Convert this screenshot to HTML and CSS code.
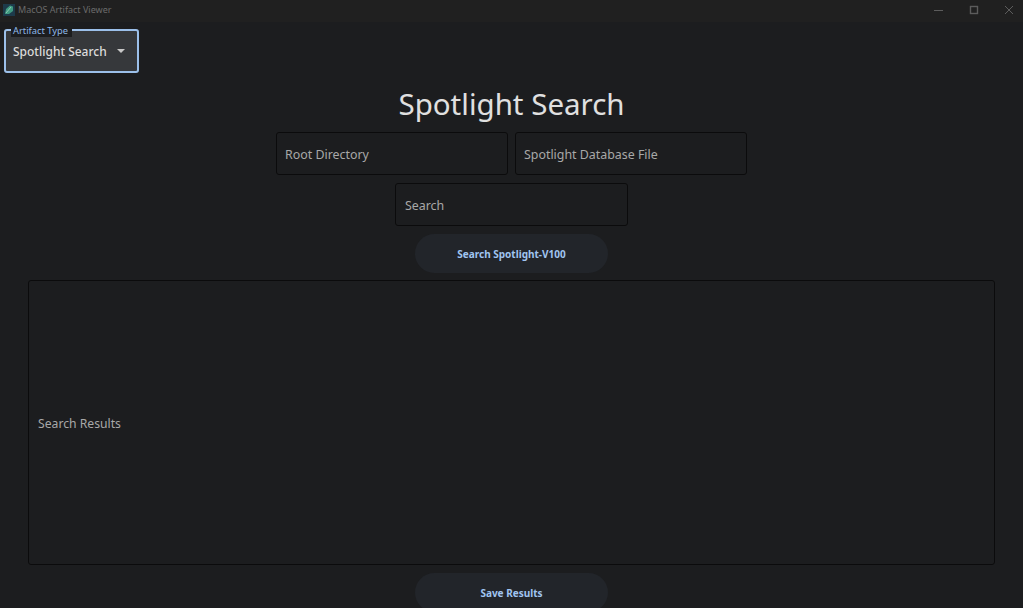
FILE: index.html
```html
<!DOCTYPE html>
<html lang="en">
<head>
    <title>MacOS Artifact Viewer</title>
    <link rel="stylesheet" href="styles.css">
</head>
<body>
    <div class="titlebar">
        <div class="app-title">
            <svg class="app-icon" width="12" height="12" viewBox="0 0 12 12">
                <rect width="12" height="12" fill="#1d3a4a"/>
                <path d="M2 10 L3 5 L7 1.5 L10 2.5 L10 7 L6 10 Z" fill="#3f9a80"/>
                <path d="M3 9 L8 3" stroke="#8cc8b4" stroke-width="1"/>
            </svg>
            <span>MacOS Artifact Viewer</span>
        </div>
        <div class="window-controls">
            <svg width="10" height="10" viewBox="0 0 10 10"><path d="M0 5.5 H9" stroke="#5c5c5c"/></svg>
            <svg width="10" height="10" viewBox="0 0 10 10"><rect x="1.5" y="1.5" width="7" height="7" fill="none" stroke="#5c5c5c" stroke-width="1.4"/></svg>
            <svg width="10" height="10" viewBox="0 0 10 10"><path d="M1 1 L9 9 M9 1 L1 9" stroke="#5c5c5c"/></svg>
        </div>
    </div>

    <div class="content">
        <div class="toolbar">
            <div class="combo">
                <span class="combo-label">Artifact Type</span>
                <span class="combo-value">Spotlight Search</span>
                <span class="combo-arrow"></span>
            </div>
        </div>

        <h1>Spotlight Search</h1>

        <div class="field-row">
            <div class="field">Root Directory</div>
            <div class="field">Spotlight Database File</div>
        </div>
        <div class="field-row">
            <div class="field field-wide">Search</div>
        </div>

        <button class="button">Search Spotlight-V100</button>

        <div class="results">Search Results</div>

        <button class="button">Save Results</button>
    </div>
</body>
</html>
```

FILE: styles.css
```css
html, body {
    height: 100%;
}

body {
    font-family: "Noto Sans", "Open Sans", sans-serif;
    background-color: #1c1d1f;
    color: #a8a8a8;
    margin: 0;
    overflow: hidden;
}

.titlebar {
    box-sizing: border-box;
    height: 22px;
    padding-bottom: 3px;
    background-color: #202020;
    display: flex;
    justify-content: space-between;
    align-items: center;
}

.app-title {
    display: flex;
    align-items: center;
    gap: 3px;
    padding-left: 3px;
    font-size: 9px;
    color: #6b6b6b;
}

.window-controls {
    display: flex;
    gap: 25px;
    padding-right: 9px;
}

.content {
    display: flex;
    flex-direction: column;
    align-items: center;
}

.toolbar {
    align-self: stretch;
    padding: 7px 0 0 4px;
}

.combo {
    position: relative;
    box-sizing: border-box;
    width: 135px;
    height: 44px;
    padding-left: 7px;
    background-color: #36383b;
    border: 2px solid #9cc0ea;
    border-radius: 3px;
    display: flex;
    align-items: center;
    gap: 10px;
}

.combo-label {
    position: absolute;
    top: -6px;
    left: 5px;
    padding: 0 4px 0 2px;
    background-color: #1c1d1f;
    font-size: 9.3px;
    line-height: 12px;
    color: #8fb8e8;
}

.combo-value {
    font-size: 12px;
    font-weight: 500;
    color: #dcdcdc;
}

.combo-arrow {
    width: 0;
    height: 0;
    border-left: 4.5px solid transparent;
    border-right: 4.5px solid transparent;
    border-top: 4.5px solid #c8c8c8;
}

h1 {
    margin: 11px 0 9px;
    font-size: 29.5px;
    font-weight: 400;
    line-height: 39px;
    color: #e0e0e0;
}

.field-row {
    display: flex;
    gap: 7px;
    margin-bottom: 8px;
}

.field {
    box-sizing: border-box;
    width: 232px;
    height: 43px;
    padding: 1px 0 0 8px;
    display: flex;
    align-items: center;
    font-size: 12.4px;
    background-color: #1c1d1f;
    border: 1px solid #0b0b0c;
    border-radius: 3px;
}

.field-wide {
    width: 233px;
    padding-left: 9px;
}

.button {
    flex: none;
    width: 193px;
    height: 39px;
    border: none;
    border-radius: 20px;
    background-color: #22252a;
    color: #a0c4f0;
    font-family: inherit;
    font-size: 10px;
    font-weight: 700;
}

.results {
    box-sizing: border-box;
    width: 967px;
    height: 285px;
    margin: 7px 0 8px;
    padding: 1px 0 0 9px;
    display: flex;
    align-items: center;
    font-size: 12.2px;
    border: 1px solid #0b0b0c;
    border-radius: 3px;
}
```
